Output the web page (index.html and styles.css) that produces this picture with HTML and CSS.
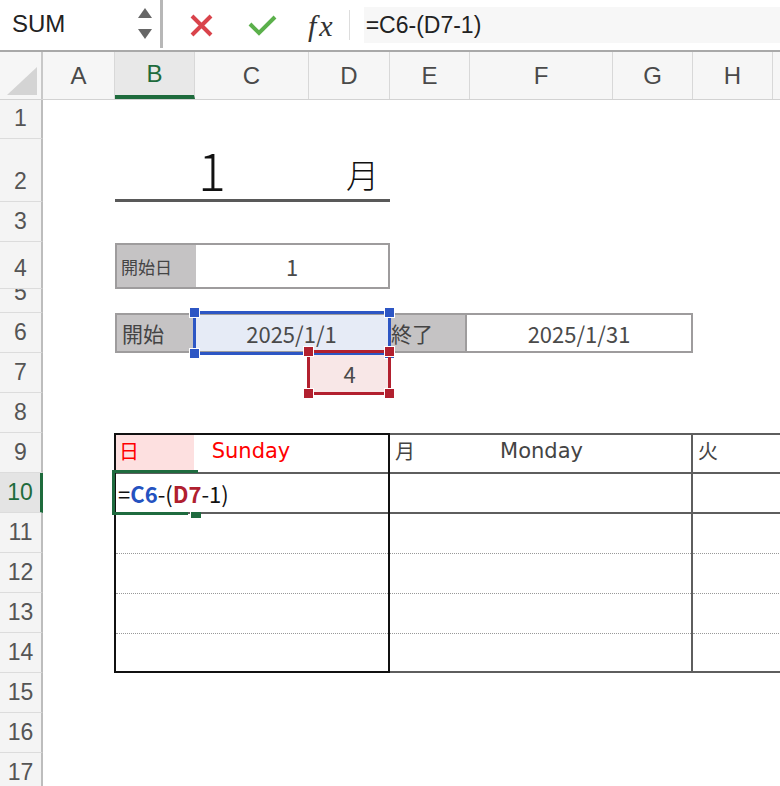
FILE: index.html
```html
<html>
	<head>
		<title>1月 カレンダー</title>
		<meta charset="utf-8">
		<link rel="stylesheet" href="styles.css">
	</head>
	<body>
		<div class="fbar">
			<div class="namebox">
				<span class="name">SUM</span>
				<span class="spin"><i class="up"></i><i class="down"></i></span>
			</div>
			<div class="fbtns">
				<svg class="cancel" width="23" height="23" viewBox="0 0 23 23"><path d="M2 2 L21 21 M21 2 L2 21"/></svg>
				<svg class="enter" width="29" height="21" viewBox="0 0 29 21"><path d="M2 9 L11 18 L27 2"/></svg>
				<span class="fx">fx</span>
				<span class="fsep"></span>
			</div>
			<div class="finput">=C6-(D7-1)</div>
		</div> <!-- end .fbar -->

		<div class="colbar">
			<div class="corner"><i></i></div>
			<div class="ch col-a">A</div>
			<div class="ch col-b on">B</div>
			<div class="ch col-c">C</div>
			<div class="ch col-d">D</div>
			<div class="ch col-e">E</div>
			<div class="ch col-f">F</div>
			<div class="ch col-g">G</div>
			<div class="ch col-h">H</div>
			<div class="ch col-i"></div>
		</div> <!-- end .colbar -->

		<div class="sheet">

			<div class="rowbar">
				<div class="rh r1"><span>1</span></div>
				<div class="rh r2"><span>2</span></div>
				<div class="rh"><span>3</span></div>
				<div class="rh r4"><span>4</span></div>
				<div class="rh r5"><span>5</span></div>
				<div class="rh"><span>6</span></div>
				<div class="rh"><span>7</span></div>
				<div class="rh"><span>8</span></div>
				<div class="rh"><span>9</span></div>
				<div class="rh on"><span>10</span></div>
				<div class="rh"><span>11</span></div>
				<div class="rh"><span>12</span></div>
				<div class="rh"><span>13</span></div>
				<div class="rh"><span>14</span></div>
				<div class="rh"><span>15</span></div>
				<div class="rh"><span>16</span></div>
				<div class="rh"><span>17</span></div>
			</div> <!-- end .rowbar -->

			<div class="cells">

				<div class="title-num">1</div>
				<div class="title-month">月</div>

				<div class="box box-startday">
					<div class="lbl lbl-small">開始日</div>
					<div class="val">1</div>
				</div>

				<div class="box box-range">
					<div class="lbl lbl-start">開始</div>
					<div class="val val-from">2025/1/1</div>
					<div class="lbl lbl-end">終了</div>
					<div class="val val-to">2025/1/31</div>
				</div>

				<div class="offset">4</div>

				<div class="week sun">
					<div class="wk-head">
						<div class="wk-day">日</div>
						<div class="wk-name">Sunday</div>
					</div>
					<div class="wk-row solid formula">=<b class="ref-c">C6</b>-(<b class="ref-d">D7</b>-1)</div>
					<div class="wk-row"></div>
					<div class="wk-row"></div>
					<div class="wk-row"></div>
					<div class="wk-row last"></div>
				</div>

				<div class="week mon">
					<div class="wk-head">
						<div class="wk-day">月</div>
						<div class="wk-name">Monday</div>
					</div>
					<div class="wk-row solid"></div>
					<div class="wk-row"></div>
					<div class="wk-row"></div>
					<div class="wk-row"></div>
					<div class="wk-row last"></div>
				</div>

				<div class="week tue">
					<div class="wk-head">
						<div class="wk-day">火</div>
					</div>
					<div class="wk-row solid"></div>
					<div class="wk-row"></div>
					<div class="wk-row"></div>
					<div class="wk-row"></div>
					<div class="wk-row last"></div>
				</div>

				<!-- reference highlights drawn over the cells -->
				<div class="ref ref-blue">
					<i class="hd tl"></i><i class="hd tr"></i><i class="hd bl"></i><i class="hd br"></i>
				</div>
				<div class="ref ref-red">
					<i class="hd tl"></i><i class="hd tr"></i><i class="hd bl"></i><i class="hd br"></i>
				</div>
				<div class="active"></div>

			</div> <!-- end .cells -->
		</div> <!-- end .sheet -->
	</body>
</html>
```

FILE: styles.css
```css
html, body {
	margin: 0;
	width: 780px;
	height: 786px;
	overflow: hidden;
	background: #fff;
}

body {
	font-family: "Noto Sans CJK JP", "Noto Sans", sans-serif;
	color: #444;
}

/* formula bar */

.fbar {
	display: flex;
	height: 50px;
	border-bottom: 2px solid #a9a9a9;
}

.namebox {
	width: 163px;
	height: 48px;
	box-sizing: border-box;
	display: flex;
	align-items: center;
	justify-content: space-between;
	padding: 0 8px 0 12px;
	border-right: 3px solid #b7b7b7;
}

.name {
	font-family: "Liberation Sans", Arial, sans-serif;
	font-size: 24px;
	color: #222;
}

.spin {
	display: flex;
	flex-direction: column;
	gap: 11px;
	margin-top: -2px;
}

.spin i {
	display: block;
	width: 0;
	height: 0;
	border-left: 7.5px solid transparent;
	border-right: 7.5px solid transparent;
}

.spin .up {
	border-bottom: 10px solid #666;
}

.spin .down {
	border-top: 10px solid #666;
}

.fbtns {
	display: flex;
	align-items: center;
	height: 50px;
	padding-left: 27px;
}

.cancel path {
	stroke: #d9434b;
	stroke-width: 4;
	fill: none;
}

.enter {
	margin-left: 35px;
}

.enter path {
	stroke: #5bb04b;
	stroke-width: 4;
	fill: none;
}

.fx {
	margin-left: 31px;
	font-family: "Liberation Serif", "Times New Roman", serif;
	font-style: italic;
	font-size: 30px;
	letter-spacing: 3px;
	color: #333;
	line-height: 1;
	margin-top: 2px;
}

.fsep {
	width: 1px;
	height: 30px;
	background: #ddd;
	margin-left: 13px;
}

.finput {
	flex: 1;
	margin: 7px 0 7px 14px;
	background: #f7f7f7;
	font-family: "Liberation Sans", Arial, sans-serif;
	font-size: 23px;
	line-height: 36px;
	color: #222;
	padding-left: 2px;
}

/* column headers */

.colbar {
	display: flex;
	height: 48px;
	background: #f6f6f6;
	border-bottom: 1px solid #d2d2d2;
	box-sizing: border-box;
}

.corner {
	width: 43px;
	flex: none;
	position: relative;
	border-right: 2px solid #c8c8c8;
	box-sizing: border-box;
}

.corner i {
	position: absolute;
	right: 4px;
	bottom: 4px;
	width: 0;
	height: 0;
	border-left: 30px solid transparent;
	border-bottom: 28px solid #d4d4d4;
}

.ch {
	flex: none;
	box-sizing: border-box;
	border-right: 1px solid #d8d8d8;
	text-align: center;
	font-family: "Liberation Sans", Arial, sans-serif;
	font-size: 24px;
	line-height: 48px;
	color: #4a4a4a;
}

.ch.on {
	background: #e8e8e8;
	color: #1e6b3c;
	border-bottom: 4px solid #1e6b3c;
	line-height: 44px;
}

.col-a { width: 72px; }
.col-b { width: 80px; }
.col-c { width: 114px; }
.col-d { width: 81px; }
.col-e { width: 80px; }
.col-f { width: 143px; }
.col-g { width: 80px; }
.col-h { width: 80px; }
.col-i { width: 30px; }

/* sheet */

.sheet {
	display: flex;
}

.rowbar {
	width: 43px;
	flex: none;
}

.rh {
	height: 40px;
	box-sizing: border-box;
	background: #f4f4f4;
	border-right: 2px solid #bdbdbd;
	border-bottom: 1px solid #dcdcdc;
	display: flex;
	align-items: flex-end;
	justify-content: center;
	overflow: hidden;
	font-family: "Liberation Sans", Arial, sans-serif;
	font-size: 23px;
	color: #555;
}

.rh span {
	display: block;
	line-height: 40px;
	flex: none;
}

.rh.r1 { height: 39px; }
.rh.r2 { height: 63px; }
.rh.r4 { height: 47px; }
.rh.r5 { height: 24px; }

.rh.on {
	background: #e4e4e4;
	color: #1e6b3c;
	border-right: 3px solid #1e6b3c;
}

.cells {
	display: grid;
	grid-template-columns: 72px 80px 114px 81px 80px 143px 80px 80px 30px;
	grid-template-rows: 39px 63px 40px 47px 24px repeat(12, 40px);
	position: relative;
}

/* title */

.title-num {
	grid-column: 2 / 4;
	grid-row: 2;
	display: flex;
	align-items: flex-end;
	justify-content: center;
	font-size: 52px;
	font-weight: 300;
	line-height: 1;
	color: #111;
	border-bottom: 3px solid #595959;
	padding-bottom: 4px;
}

.title-month {
	grid-column: 4;
	grid-row: 2;
	display: flex;
	align-items: flex-end;
	justify-content: flex-end;
	padding-right: 11px;
	padding-bottom: 8px;
	font-size: 33px;
	font-weight: 300;
	line-height: 1;
	color: #111;
	border-bottom: 3px solid #595959;
}

/* bordered boxes */

.box {
	display: flex;
	border: 2px solid #9e9c9d;
}

.box-startday {
	grid-column: 2 / 5;
	grid-row: 4;
	margin-top: 1px;
}

.box-range {
	grid-column: 2 / 8;
	grid-row: 6;
}

.lbl {
	background: #c5c3c4;
	display: flex;
	align-items: center;
	padding-left: 4px;
	box-sizing: border-box;
	color: #444;
}

.lbl-small {
	width: 79px;
	font-size: 17px;
}

.lbl-start {
	width: 76px;
	font-size: 21px;
	padding-left: 5px;
}

.lbl-end {
	width: 77px;
	font-size: 21px;
	padding-left: 1px;
	border-right: 2px solid #9e9c9d;
}

.val {
	flex: 1;
	display: flex;
	align-items: center;
	justify-content: center;
	font-size: 22px;
	color: #4a4a4a;
}

.val-from {
	flex: 0 0 197px;
	background: #e6ebf6;
}

.offset {
	grid-column: 4;
	grid-row: 7;
	background: #f8e7e7;
	display: flex;
	align-items: center;
	justify-content: center;
	font-size: 22px;
	color: #4a4a4a;
}

/* calendar */

.week {
	grid-row: 9 / 15;
	display: flex;
	flex-direction: column;
	border-top: 2px solid #5e5e5e;
	border-bottom: 2px solid #5e5e5e;
}

.sun {
	grid-column: 2 / 5;
	border: 2px solid #111;
	margin-left: -1px;
}

.mon {
	grid-column: 5 / 8;
	border-right: 2px solid #5e5e5e;
}

.tue {
	grid-column: 8 / 10;
}

.wk-head {
	height: 39px;
	flex: none;
	box-sizing: border-box;
	border-bottom: 2px solid #5e5e5e;
	display: flex;
	font-size: 20px;
}

.wk-day {
	width: 80px;
	flex: none;
	padding-left: 5px;
	padding-top: 1px;
	box-sizing: border-box;
	color: #444;
}

.wk-name {
	width: 143px;
	text-align: center;
	font-family: "DejaVu Sans", Verdana, sans-serif;
	font-size: 21px;
	line-height: 33px;
	color: #444;
}

.sun .wk-day {
	width: 78px;
	padding-left: 3px;
	background: #fde0e0;
	color: #f00;
}

.sun .wk-name {
	width: 114px;
	color: #f00;
}

.wk-row {
	height: 40px;
	flex: none;
	box-sizing: border-box;
	border-bottom: 1px dotted #999;
}

.wk-row.solid {
	border-bottom: 2px solid #5e5e5e;
}

.wk-row.last {
	flex: 1;
	border-bottom: 0;
}

.formula {
	font-size: 22px;
	line-height: 38px;
	padding-left: 2px;
	color: #111;
}

.formula b {
	font-weight: 700;
}

.ref-c {
	color: #2452c0;
}

.ref-d {
	color: #b0202f;
}

/* highlights over cells */

.ref {
	position: absolute;
	box-sizing: border-box;
	border: 3px solid;
}

.ref-blue {
	left: 150px;
	top: 211px;
	width: 198px;
	height: 44px;
	border-color: #2d56c4;
}

.ref-red {
	left: 264px;
	top: 250px;
	width: 84px;
	height: 45px;
	border-color: #b2202f;
}

.hd {
	position: absolute;
	width: 9px;
	height: 9px;
	border: 1px solid #fff;
}

.ref-blue .hd { background: #2d56c4; }
.ref-red .hd { background: #b2202f; }

.hd.tl { left: -7px; top: -7px; }
.hd.tr { right: -7px; top: -7px; }
.hd.bl { left: -7px; bottom: -7px; }
.hd.br { right: -7px; bottom: -7px; }

.active {
	position: absolute;
	left: 69px;
	top: 370px;
	width: 83px;
	height: 42px;
	border-top: 3px solid #1f6b3f;
	border-left: 3px solid #1f6b3f;
}

.active::after {
	content: "";
	position: absolute;
	left: -3px;
	bottom: 0;
	width: 76px;
	height: 3px;
	background: #1f6b3f;
}

.active::before {
	content: "";
	position: absolute;
	left: 75px;
	top: 39px;
	width: 10px;
	height: 6px;
	background: #1f6b3f;
	border-left: 1px solid #fff;
}
```
